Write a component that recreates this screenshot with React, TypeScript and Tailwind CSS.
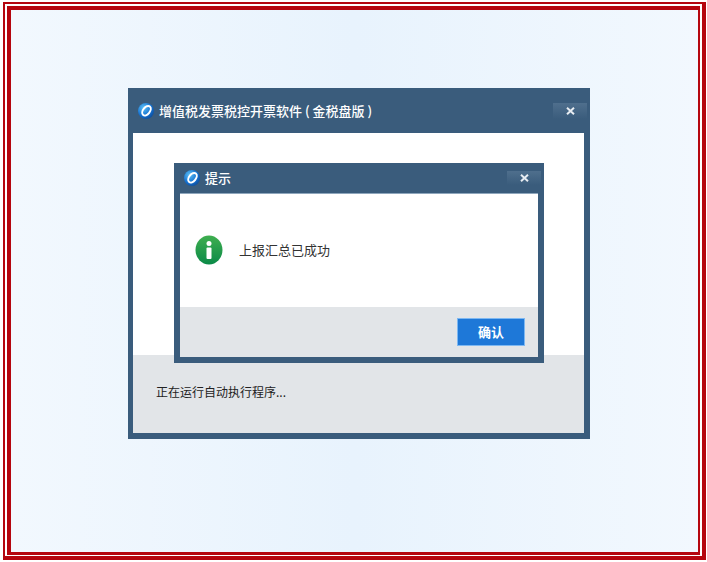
const LogoIcon = () => (
  <svg width="18" height="18" viewBox="0 0 18 18" className="shrink-0">
    <defs>
      <radialGradient id="logoBall" cx="35%" cy="30%" r="75%">
        <stop offset="0%" stopColor="#5cc0f5" />
        <stop offset="65%" stopColor="#1470d0" />
        <stop offset="100%" stopColor="#0d4f9e" />
      </radialGradient>
    </defs>
    <circle cx="9" cy="9" r="8" fill="url(#logoBall)" />
    <ellipse cx="9.5" cy="8.8" rx="3.4" ry="5.4" transform="rotate(38 9.5 8.8)" fill="none" stroke="#ffffff" strokeWidth="2" />
  </svg>
);

const CloseButton = ({ big }: { big?: boolean }) => (
  <div className={`flex items-center justify-center bg-gradient-to-b from-[#4f6f8d] to-[#3a5c7c] text-[#e8edf2] ${big ? 'w-[34px] h-[16px]' : 'w-[34px] h-[14px]'}`}>
    <svg width="9" height="8" viewBox="0 0 9 8">
      <path d="M1 0.8 L8 7.2 M8 0.8 L1 7.2" stroke="currentColor" strokeWidth="2" fill="none" />
    </svg>
  </div>
);

const InfoIcon = () => (
  <svg width="28" height="30" viewBox="0 0 28 30" className="shrink-0">
    <defs>
      <linearGradient id="infoBall" x1="0" y1="0" x2="0" y2="1">
        <stop offset="0%" stopColor="#3fae4f" />
        <stop offset="100%" stopColor="#0b8a48" />
      </linearGradient>
    </defs>
    <ellipse cx="14" cy="15" rx="13.5" ry="14.5" fill="url(#infoBall)" />
    <circle cx="14" cy="8.5" r="2.5" fill="#ffffff" />
    <rect x="11.5" y="12.5" width="5" height="11.5" rx="1" fill="#ffffff" />
  </svg>
);

export default function App() {
  return (
    <div className="w-[707px] h-[562px] bg-white pt-[2px] pl-[3px] pr-[1px] pb-[2px] font-['Noto_Sans_CJK_SC','Liberation_Sans',sans-serif]">
      <div className="h-full border-t-2 border-l-2 border-r-[4px] border-b-[4px] border-[#b5060f] p-[2px] pb-[1px] pr-[2px]">
        <div className="h-full border-t-[4px] border-l-[4px] border-r-2 border-b-[3px] border-[#b5060f] bg-gradient-to-r from-[#f2f8fe] via-[#e8f3fd] to-[#f2f8fe] pt-[78px] pl-[117px]">
          {/* main window */}
          <div className="relative w-[462px] h-[351px] bg-[#3a5c7c] flex flex-col">
            <div className="h-[45px] flex items-center pl-[9px] pr-[3px] gap-[4px] shrink-0">
              <LogoIcon />
              <span className="text-[13px] font-medium text-white flex-1 whitespace-nowrap">增值税发票税控开票软件 ( 金税盘版 )</span>
              <CloseButton big />
            </div>
            <div className="flex-1 mx-[5px] mb-[6px] mr-[6px] flex flex-col">
              <div className="h-[222px] bg-white"></div>
              <div className="flex-1 bg-[#e2e5e8] pl-[23px] pt-[27px] text-[12px] leading-[20px] text-[#222222]">正在运行自动执行程序...</div>
            </div>

            {/* prompt dialog */}
            <div className="absolute left-[46px] top-[75px] w-[370px] h-[200px] bg-[#3a5c7c] flex flex-col">
              <div className="h-[30px] flex items-center pl-[9px] pr-[3px] gap-[4px] shrink-0">
                <LogoIcon />
                <span className="text-[13px] font-medium text-white flex-1">提示</span>
                <CloseButton />
              </div>
              <div className="flex-1 ml-[6px] mr-[6px] mb-[6px] flex flex-col border-t border-[#8ea6bc]">
                <div className="h-[113px] bg-white flex items-center pl-[15px] gap-[16px] pb-[1px]">
                  <InfoIcon />
                  <span className="text-[13px] text-[#333333]">上报汇总已成功</span>
                </div>
                <div className="flex-1 bg-[#e2e5e8] flex items-start justify-end pt-[11px] pr-[13px]">
                  <button className="w-[68px] h-[28px] bg-[#1e78d8] border border-[#7db8f2] text-white text-[13px] font-bold">确认</button>
                </div>
              </div>
            </div>
          </div>
        </div>
      </div>
    </div>
  );
}
